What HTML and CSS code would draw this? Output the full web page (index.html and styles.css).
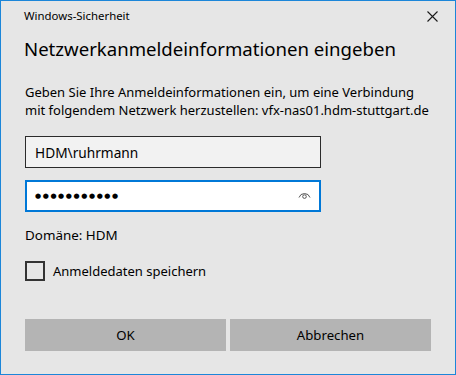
FILE: index.html
```html
<!DOCTYPE html>
<html lang="de">
<head>
<meta charset="utf-8">
<title>Windows-Sicherheit</title>
<link rel="stylesheet" href="styles.css">
</head>
<body>
<div class="window">
  <div class="titlebar">
    <span class="app-title">Windows-Sicherheit</span>
    <svg class="close" width="11" height="11" viewBox="0 0 11 11" aria-label="Schließen">
      <path d="M0.5 0.5 L10.5 10.5 M10.5 0.5 L0.5 10.5" stroke="#1a1a1a" stroke-width="1.1" fill="none"/>
    </svg>
  </div>
  <h1 class="heading">Netzwerkanmeldeinformationen eingeben</h1>
  <p class="desc">Geben Sie Ihre Anmeldeinformationen ein, um eine Verbindung<br>mit folgendem Netzwerk herzustellen: vfx-nas01.hdm-stuttgart.de</p>
  <div class="field field-user"><span class="field-text">HDM\ruhrmann</span></div>
  <div class="field field-pass">
    <span class="dots">●●●●●●●●●●●</span>
    <svg class="eye" width="13" height="8" viewBox="0 0 13 8">
      <path d="M1 6.5 A5.8 5.8 0 0 1 12 6.5" stroke="#555" stroke-width="1" fill="none"/>
      <circle cx="6.5" cy="5.6" r="1.8" stroke="#555" stroke-width="1" fill="none"/>
    </svg>
  </div>
  <div class="domain">Domäne: HDM</div>
  <label class="check-row"><span class="checkbox"></span><span class="check-label">Anmeldedaten speichern</span></label>
  <div class="buttons">
    <div class="btn">OK</div>
    <div class="btn">Abbrechen</div>
  </div>
</div>
</body>
</html>
```
FILE: styles.css
```css
html, body {
  margin: 0;
  padding: 0;
}
body {
  font-family: "Noto Sans", "Open Sans", sans-serif;
  color: #000;
  background: #e6e6e6;
}
.window {
  box-sizing: border-box;
  width: 456px;
  height: 375px;
  border: 1px solid #1c86d9;
  background: #e6e6e6;
  padding: 0 24px;
}
.titlebar {
  height: 30px;
  display: flex;
  align-items: center;
  justify-content: space-between;
  margin-left: -1px;
  margin-right: -7px;
}
.app-title {
  font-size: 11.4px;
  line-height: 18px;
  color: #000;
}
.close {
  display: block;
}
.heading {
  margin: 4px 0 0 -1px;
  font-size: 18.6px;
  line-height: 28px;
  font-weight: 400;
  color: #000;
}
.desc {
  margin: 20px 0 0;
  font-size: 13px;
  line-height: 18px;
  color: #000;
}
.field {
  box-sizing: border-box;
  width: 296px;
  height: 32px;
  display: flex;
  align-items: center;
  padding: 0 9px;
}
.field-user {
  margin-top: 17px;
  background: #f2f2f2;
  border: 1px solid #2b2b2b;
}
.field-text {
  font-size: 13.7px;
  color: #000;
}
.field-pass {
  margin-top: 12px;
  background: #fff;
  border: 2px solid #0078d7;
  justify-content: space-between;
  padding: 0 8px 0 8px;
}
.dots {
  font-family: "DejaVu Sans", sans-serif;
  font-size: 7px;
  letter-spacing: 1.6px;
  color: #000;
}
.eye {
  display: block;
  margin-top: -2px;
}
.domain {
  margin-top: 14px;
  font-size: 13.4px;
  line-height: 18px;
}
.check-row {
  margin-top: 17px;
  display: flex;
  align-items: center;
}
.checkbox {
  box-sizing: border-box;
  width: 20px;
  height: 20px;
  border: 2px solid #333;
}
.check-label {
  margin-left: 8px;
  font-size: 13px;
  line-height: 18px;
}
.buttons {
  margin-top: 38px;
  display: flex;
  gap: 4px;
}
.btn {
  width: 201px;
  height: 32px;
  display: flex;
  align-items: center;
  justify-content: center;
  background: #b4b4b4;
  font-size: 13.2px;
}
```
